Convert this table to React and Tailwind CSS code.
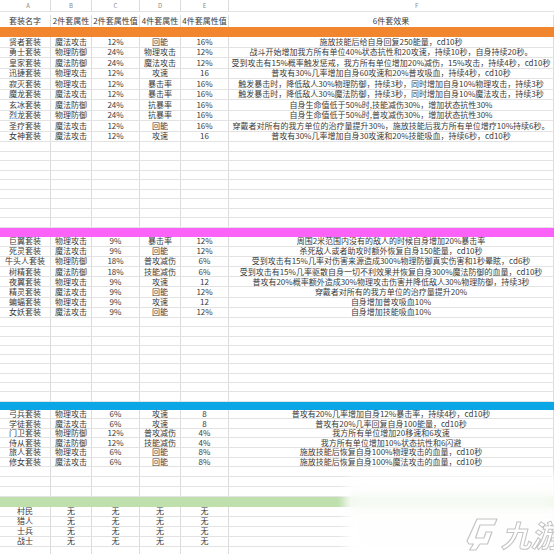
import React from "react";

const GRID = "grid grid-cols-[51px_41px_48px_41px_48px_1fr]";
const CELL = "flex items-center justify-center border-r border-[#dcdcdc] whitespace-nowrap overflow-visible leading-none";

const sec1 = [
  ["贤者套装", "魔法攻击", "12%", "回能", "16%", "施放技能后给自身回复250能量，cd10秒"],
  ["勇士套装", "物理防御", "24%", "物理攻击", "12%", "战斗开始增加我方所有单位40%状态抗性和20攻速，持续10秒，自身持续20秒。"],
  ["皇家套装", "魔法防御", "24%", "魔法攻击", "12%", "受到攻击有15%概率触发惩戒，我方所有单位增加20%减伤，15%攻击，持续4秒，cd10秒"],
  ["迅捷套装", "物理攻击", "12%", "攻速", "16", "普攻有30%几率增加自身60攻速和20%普攻吸血，持续4秒，cd10秒"],
  ["寂灭套装", "物理攻击", "12%", "暴击率", "16%", "触发暴击时，降低敌人30%物理防御，持续3秒，同时增加自身10%物理攻击，持续3秒"],
  ["魔龙套装", "魔法攻击", "12%", "暴击率", "16%", "触发暴击时，降低敌人30%魔法防御，持续3秒，同时增加自身10%魔法攻击，持续3秒"],
  ["玄冰套装", "魔法防御", "24%", "抗暴率", "16%", "自身生命值低于50%时,技能减伤30%，增加状态抗性30%"],
  ["烈龙套装", "物理防御", "24%", "抗暴率", "16%", "自身生命值低于50%时,普攻减伤30%，增加状态抗性30%"],
  ["圣疗套装", "魔法攻击", "12%", "回能", "16%", "穿戴者对所有的我方单位的治疗量提升30%，施放技能后我方所有单位增疗10%持续6秒。"],
  ["女神套装", "魔法攻击", "12%", "攻速", "16", "普攻有30%几率增加自身30攻速和20%技能吸血，持续6秒，cd10秒"],
];

const sec2 = [
  ["巨翼套装", "物理攻击", "9%", "暴击率", "12%", "周围2米范围内没有的敌人的时候自身增加20%暴击率"],
  ["死灵套装", "魔法攻击", "9%", "回能", "12%", "杀死敌人或者助攻时额外恢复自身150能量，cd10秒"],
  ["牛头人套装", "物理防御", "18%", "普攻减伤", "6%", "受到攻击有15%几率对伤害来源造成300%物理防御真实伤害和1秒晕眩，cd6秒"],
  ["树精套装", "魔法防御", "18%", "技能减伤", "6%", "受到攻击有15%几率驱散自身一切不利效果并恢复自身300%魔法防御的血量，cd10秒"],
  ["夜翼套装", "物理攻击", "9%", "攻速", "12", "普攻有20%概率额外造成30%物理攻击伤害并降低敌人30%物理防御，持续3秒"],
  ["精灵套装", "魔法攻击", "9%", "回能", "12%", "穿戴者对所有的我方单位的治疗量提升20%"],
  ["蝙蝠套装", "物理攻击", "9%", "攻速", "12", "自身增加普攻吸血10%"],
  ["女妖套装", "魔法攻击", "9%", "回能", "12%", "自身增加技能吸血10%"],
];

const sec3 = [
  ["弓兵套装", "物理攻击", "6%", "攻速", "8", "普攻有20%几率增加自身12%暴击率，持续4秒，cd10秒"],
  ["学徒套装", "魔法攻击", "6%", "攻速", "8", "普攻有20%几率回复自身100能量，cd10秒"],
  ["门卫套装", "物理防御", "12%", "普攻减伤", "4%", "我方所有单位增加20移速和6攻速"],
  ["侍从套装", "魔法防御", "12%", "技能减伤", "4%", "我方所有单位增加10%状态抗性和6闪避"],
  ["旅人套装", "物理攻击", "6%", "回能", "8%", "施放技能后恢复自身100%物理攻击的血量，cd10秒"],
  ["修女套装", "魔法攻击", "6%", "回能", "8%", "施放技能后恢复自身100%魔法攻击的血量，cd10秒"],
];

const sec4 = [
  ["村民", "无", "无", "无", "无", ""],
  ["猎人", "无", "无", "无", "无", ""],
  ["士兵", "无", "无", "无", "无", ""],
  ["战士", "无", "无", "无", "无", ""],
];

function Row({ cells, h }) {
  return (
    <div className={`${GRID} ${h} border-b border-[#e3e3e3]`}>
      {cells.map((c, i) => (
        <div key={i} className={CELL}>
          {c}
        </div>
      ))}
    </div>
  );
}

function Empty({ n, h }) {
  return (
    <>
      {Array.from({ length: n }).map((_, i) => (
        <Row key={i} cells={["", "", "", "", "", ""]} h={h} />
      ))}
    </>
  );
}

function Logo() {
  return (
    <svg width="34" height="34" viewBox="0 0 34 34" fill="#ffffff" stroke="#c4c4c4" strokeWidth="1.2" strokeLinejoin="round">
      <path d="M12 2 L32 2 L29.5 8 L15 8 L10.5 21 L19 21 L21 15 L27 15 L22.5 27 L15 27 L11 33 L4.5 33 L8.5 27 L4 27 L2 24 Z" />
    </svg>
  );
}

export default function App() {
  return (
    <div className="relative w-[554px] h-[554px] overflow-hidden bg-white text-[8px] text-[#3a3a3a] font-['Noto_Sans_CJK_SC','Liberation_Sans',sans-serif]">
      {/* column letters */}
      <div className={`${GRID} h-[12px] text-[6px] text-[#8a8a8a] border-b border-[#e3e3e3]`}>
        <div className="flex justify-center pt-[1px] pl-[6px] border-r border-[#dcdcdc]">A</div>
        <div className="flex justify-center pt-[1px] border-r border-[#dcdcdc]">B</div>
        <div className="flex justify-center pt-[1px] border-r border-[#dcdcdc]">C</div>
        <div className="flex justify-center pt-[1px] border-r border-[#dcdcdc]">D</div>
        <div className="flex justify-center pt-[1px] border-r border-[#dcdcdc]">E</div>
        <div className="flex justify-start pt-[1px] pl-[186px]">F</div>
      </div>
      {/* header */}
      <div className={`${GRID} h-[15px] pt-[3px]`}>
        {["套装名字", "2件套属性", "2件套属性值", "4件套属性", "4件套属性值", "6件套效果"].map((c, i) => (
          <div key={i} className={CELL}>{c}</div>
        ))}
      </div>
      <div className="h-[10px] bg-[#f2862e]" />
      {sec1.map((r, i) => (
        <Row key={i} cells={r} h="h-[10.5px]" />
      ))}
      <Empty n={9} h="h-[9.5px]" />
      <div className="h-[9px] bg-[#fb62f8]" />
      {sec2.map((r, i) => (
        <Row key={i} cells={r} h="h-[10.2px]" />
      ))}
      <Empty n={9} h="h-[9.3px]" />
      <div className="h-[8px] bg-[#0aa6e6]" />
      {sec3.map((r, i) => (
        <Row key={i} cells={r} h="h-[9.6px]" />
      ))}
      <Empty n={3} h="h-[9.8px]" />
      <div className="h-[10px] bg-[#bfdfad]" />
      {sec4.map((r, i) => (
        <Row key={i} cells={r} h="h-[10px]" />
      ))}
      <Empty n={2} h="h-[10px]" />

      {/* watermark overlay */}
      <div className="absolute left-[350px] top-[480px] w-[220px] h-[90px]">
        <div className="absolute inset-0 rounded-tl-[10px] bg-white/75 backdrop-blur-[6px] shadow-[0_0_8px_6px_rgba(255,255,255,0.8)]" />
        <div className="absolute left-[115px] top-[37px] flex items-center gap-[2px]">
          <Logo />
          <span className="italic text-[30px] leading-none font-bold text-white [-webkit-text-stroke:1px_#c4c4c4] font-['Noto_Sans_CJK_SC',sans-serif]">
            九游
          </span>
        </div>
      </div>
    </div>
  );
}
